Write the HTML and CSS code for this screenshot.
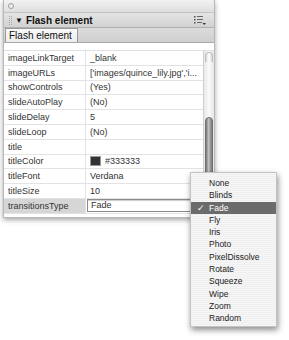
FILE: index.html
```html
<!doctype html>
<html lang="en">
<head>
    <meta charset="UTF-8">
    <title>Flash element</title>
    <link rel="stylesheet" href="styles.css">
</head>
<body>
<div class="panel">
    <div class="titlebar"><span class="dot"></span></div>
    <div class="header">
        <span class="grip"></span>
        <span class="arrow">&#9660;</span>
        <span class="title">Flash element</span>
        <svg class="opts" width="12" height="9" viewBox="0 0 12 9">
            <rect x="0" y="0" width="1.5" height="1.5" fill="#555"/>
            <rect x="0" y="3" width="1.5" height="1.5" fill="#555"/>
            <rect x="0" y="6" width="1.5" height="1.5" fill="#555"/>
            <rect x="3" y="0" width="6" height="1" fill="#666"/>
            <rect x="3" y="3" width="6" height="1" fill="#666"/>
            <rect x="3" y="6" width="5" height="1" fill="#666"/>
            <path d="M8.5 7 L12 7 L10.25 9 Z" fill="#333"/>
        </svg>
    </div>
    <div class="tabs"><span class="tab">Flash element</span></div>
    <div class="gap"></div>
    <div class="body">
        <div class="props">
            <div class="row"><span class="key">imageLinkTarget</span><span class="val">_blank</span></div>
            <div class="row"><span class="key">imageURLs</span><span class="val">['images/quince_lily.jpg','i...</span></div>
            <div class="row"><span class="key">showControls</span><span class="val">(Yes)</span></div>
            <div class="row"><span class="key">slideAutoPlay</span><span class="val">(No)</span></div>
            <div class="row"><span class="key">slideDelay</span><span class="val">5</span></div>
            <div class="row"><span class="key">slideLoop</span><span class="val">(No)</span></div>
            <div class="row"><span class="key">title</span><span class="val"></span></div>
            <div class="row"><span class="key">titleColor</span><span class="val"><span class="swatch"></span>#333333</span></div>
            <div class="row"><span class="key">titleFont</span><span class="val">Verdana</span></div>
            <div class="row"><span class="key">titleSize</span><span class="val">10</span></div>
            <div class="row active"><span class="key">transitionsType</span><span class="val"><span class="field">Fade</span></span></div>
        </div>
        <div class="scroll">
            <span class="cap"></span>
            <span class="thumb"></span>
        </div>
    </div>
</div>

<ul class="menu">
    <li>None</li>
    <li>Blinds</li>
    <li class="sel">Fade</li>
    <li>Fly</li>
    <li>Iris</li>
    <li>Photo</li>
    <li>PixelDissolve</li>
    <li>Rotate</li>
    <li>Squeeze</li>
    <li>Wipe</li>
    <li>Zoom</li>
    <li>Random</li>
</ul>
</body>
</html>
```

FILE: styles.css
```css
* {
    margin: 0;
    padding: 0;
    box-sizing: border-box;
}

body {
    background-color: #fff;
    font-family: "Liberation Sans", Arial, sans-serif;
    font-size: 9px;
    color: #333;
    position: relative;
    width: 289px;
    height: 340px;
    overflow: hidden;
}

.panel {
    width: 212px;
    margin-left: 3px;
    background-color: #fff;
    border: 1px solid #b8b8b8;
    border-top: none;
    box-shadow: 0 2px 5px rgba(0, 0, 0, 0.35);
    padding-bottom: 3px;
}

.titlebar {
    height: 13px;
    background: linear-gradient(#f2f2f2, #dedede);
    border-bottom: 1px solid #c4c4c4;
    padding: 3px 0 0 4px;
}

.dot {
    display: block;
    width: 6px;
    height: 6px;
    border-radius: 50%;
    border: 1px solid #9a9a9a;
    background-color: #eee;
}

.header {
    height: 15px;
    display: flex;
    align-items: center;
    background: linear-gradient(#e4e4e4, #d2d2d2);
    border-bottom: 1px solid #b0b0b0;
    padding: 0 8px 0 5px;
}

.grip {
    width: 3px;
    height: 9px;
    border-left: 1px dotted #aaa;
    border-right: 1px dotted #aaa;
    margin-right: 3px;
}

.arrow {
    font-size: 8px;
    color: #111;
    margin-right: 3px;
}

.title {
    font-weight: bold;
    font-size: 10px;
    color: #111;
    flex: 1;
}

.tabs {
    height: 15px;
    background: linear-gradient(#dcdcdc, #cfcfcf);
    border-bottom: 1px solid #a8a8a8;
    padding-left: 1px;
    display: flex;
    align-items: flex-end;
}

.tab {
    height: 14px;
    width: 73px;
    background: linear-gradient(#fafafa, #ececec);
    border: 1px solid #999;
    border-bottom: none;
    padding: 1px 0 0 3px;
    font-size: 10px;
    color: #111;
}

.gap {
    height: 8px;
    border-bottom: 1px solid #e0e0e0;
}

.body {
    display: flex;
}

.props {
    flex: 1;
}

.row {
    display: flex;
    height: 14.8px;
    border-bottom: 1px solid #e3e3e3;
    align-items: center;
}

.key {
    width: 82px;
    padding-left: 4px;
    border-right: 1px solid #e3e3e3;
    height: 100%;
    display: flex;
    align-items: center;
}

.val {
    flex: 1;
    padding-left: 4px;
    display: flex;
    align-items: center;
    white-space: nowrap;
    overflow: hidden;
}

.swatch {
    width: 11px;
    height: 10px;
    background-color: #333;
    border: 1px solid #999;
    margin-right: 4px;
}

.active .key {
    background-color: #d6d6d6;
}

.active .val {
    padding-left: 1px;
}

.field {
    width: 103px;
    height: 13px;
    border: 1px solid #8a8a8a;
    border-right: none;
    padding: 0 0 0 3px;
    line-height: 11px;
    background-color: #fff;
    box-shadow: inset 0 1px 1px rgba(0, 0, 0, 0.2);
}

.scroll {
    width: 11px;
    border-left: 1px solid #cfcfcf;
    background: linear-gradient(90deg, #e8e8e8, #fafafa 50%, #e6e6e6);
    position: relative;
}

.cap {
    display: block;
    height: 10px;
    margin: 1px 1px 0;
    border-radius: 4px 4px 0 0;
    border: 1px solid #bcbcbc;
    border-bottom: none;
    background: linear-gradient(90deg, #dcdcdc, #fff 50%, #d8d8d8);
}

.thumb {
    position: absolute;
    left: 1px;
    right: 1px;
    top: 66px;
    bottom: 0;
    border-radius: 4px 4px 0 0;
    border: 1px solid #6e6e6e;
    background: linear-gradient(90deg, #777, #c8c8c8 45%, #aaa 60%, #7a7a7a);
}

.menu {
    list-style: none;
    position: absolute;
    left: 190px;
    top: 172px;
    width: 87px;
    height: 155px;
    padding-top: 4px;
    background: repeating-linear-gradient(#f6f6f6 0, #f6f6f6 1px, #efefef 1px, #efefef 2px);
    border: 1px solid #c2c2c2;
    box-shadow: 1px 3px 6px rgba(0, 0, 0, 0.45);
    font-size: 8.5px;
}

.menu li {
    height: 12.3px;
    line-height: 12.3px;
    padding-left: 18px;
    color: #222;
    position: relative;
}

.menu li.sel {
    background-color: #6b6b6b;
    color: #fff;
}

.menu li.sel:before {
    content: "\2713";
    position: absolute;
    left: 6px;
    font-size: 9px;
}
```
